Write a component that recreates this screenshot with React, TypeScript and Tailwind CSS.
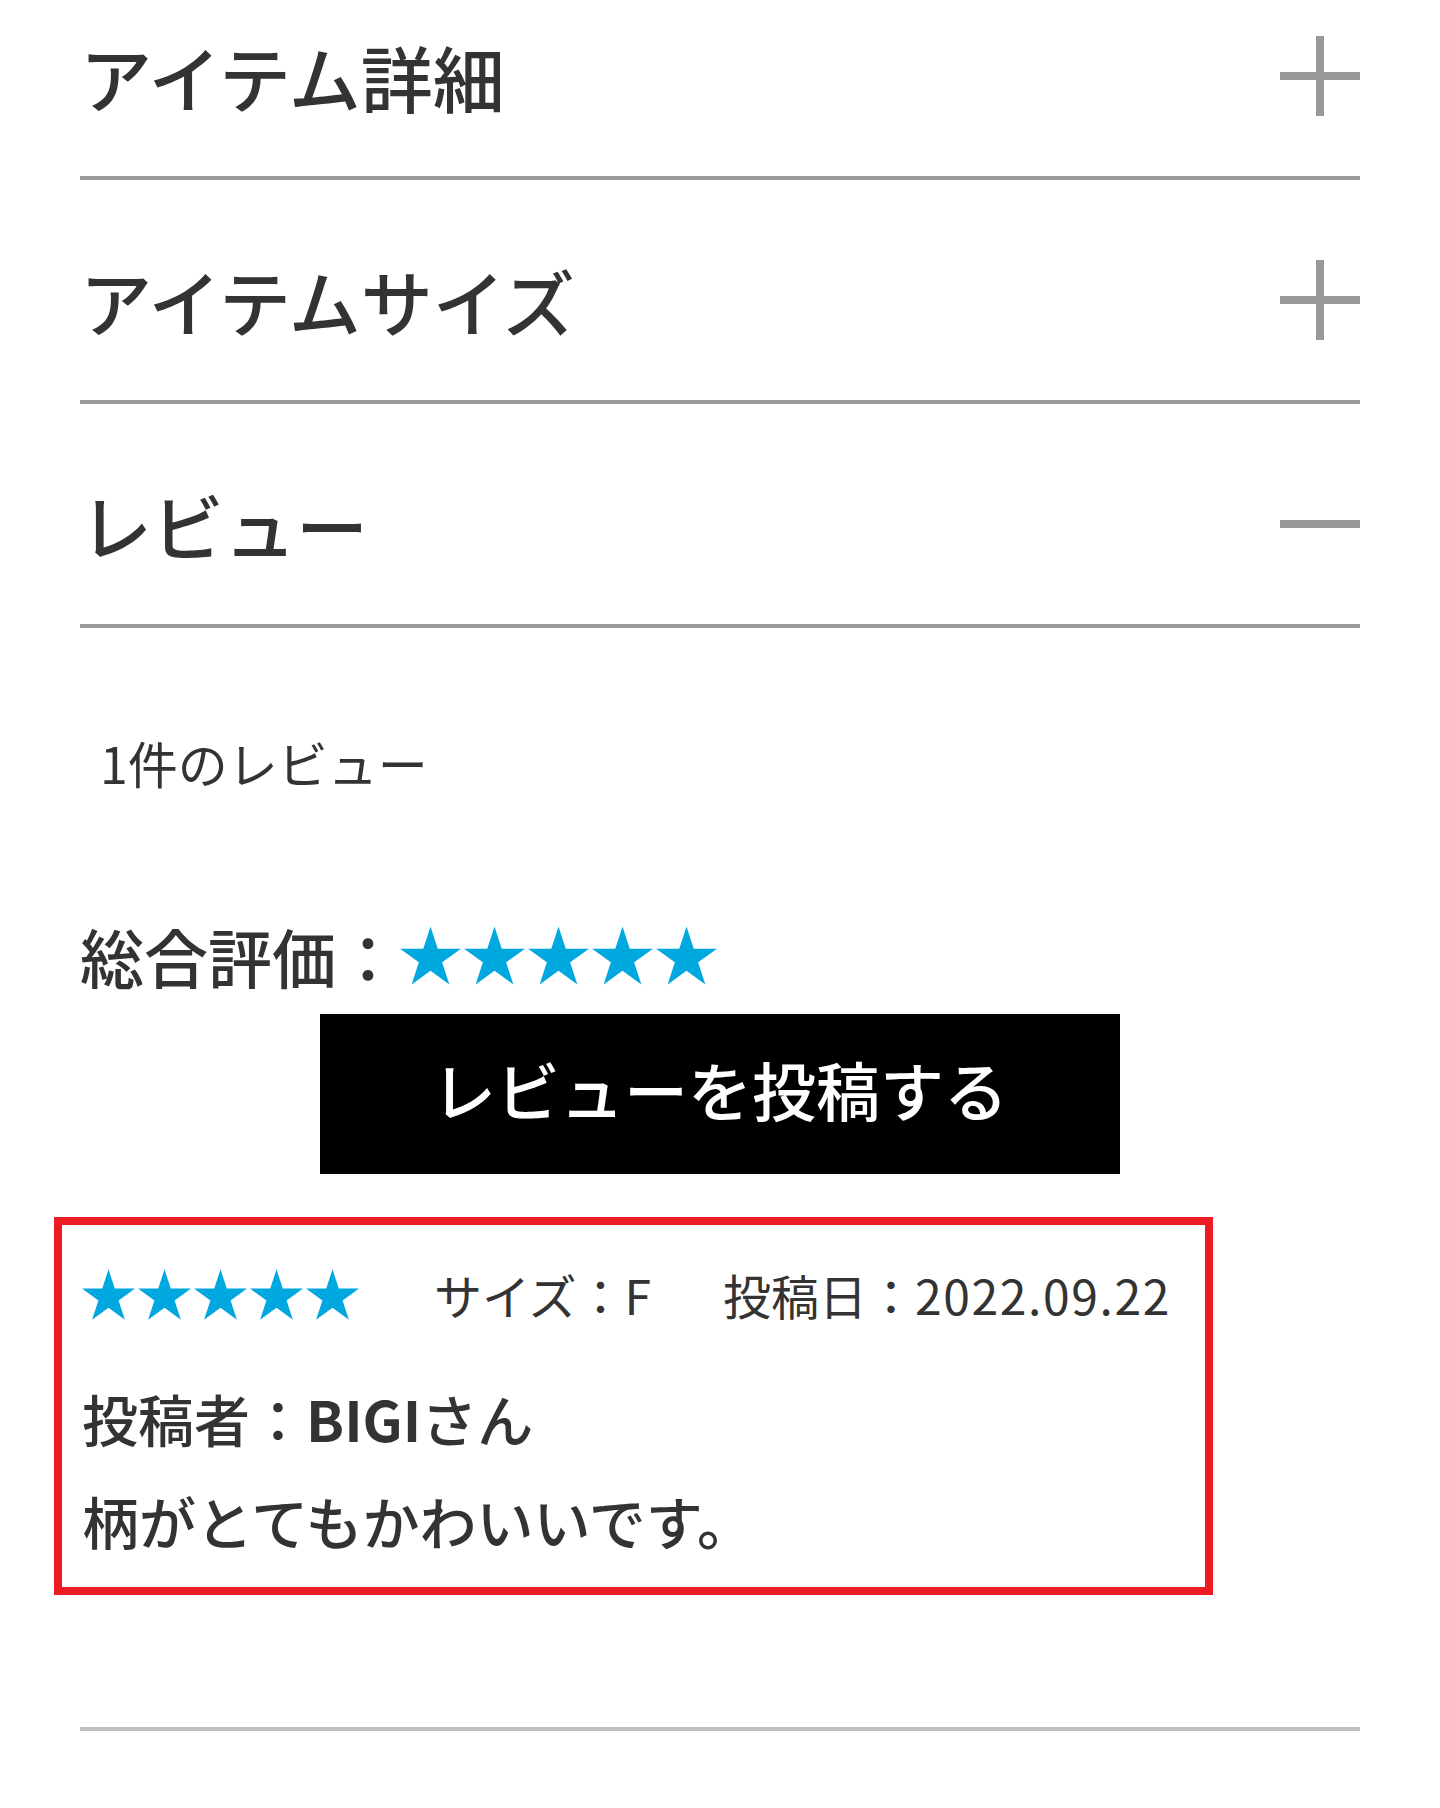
import React from "react";

const STAR_POINTS =
  "50,0 61.23,34.55 97.55,34.55 68.16,55.9 79.39,90.45 50,69.1 20.61,90.45 31.84,55.9 2.45,34.55 38.77,34.55";

function Star({ w, h }: { w: number; h: number }) {
  return (
    <svg width={w} height={h} viewBox="2.45 0 95.1 90.45" className="block shrink-0">
      <polygon fill="#00a8df" points={STAR_POINTS} />
    </svg>
  );
}

function Stars({ w, h, gap }: { w: number; h: number; gap: string }) {
  return (
    <div className={`flex items-center ${gap}`}>
      {[0, 1, 2, 3, 4].map((i) => (
        <Star key={i} w={w} h={h} />
      ))}
    </div>
  );
}

function PlusIcon() {
  return (
    <svg width={80} height={80} viewBox="0 0 80 80" className="block shrink-0">
      <rect x={36} y={0} width={8} height={80} fill="#999999" />
      <rect x={0} y={36} width={80} height={8} fill="#999999" />
    </svg>
  );
}

function MinusIcon() {
  return (
    <svg width={80} height={80} viewBox="0 0 80 80" className="block shrink-0">
      <rect x={0} y={36} width={80} height={8} fill="#999999" />
    </svg>
  );
}

function Row({ title, open, first }: { title: string; open?: boolean; first?: boolean }) {
  return (
    <div
      className={`flex items-center justify-between border-b-4 border-[#999999] ${
        first ? "pt-[36px]" : "pt-[80px]"
      } pb-[60px]`}
    >
      <span className="text-[72px] leading-none font-medium text-[#333333]">{title}</span>
      {open ? <MinusIcon /> : <PlusIcon />}
    </div>
  );
}

export default function App() {
  return (
    <div className="min-h-[1808px] w-full bg-white font-['Noto_Sans_CJK_JP',sans-serif] text-[#333333]">
      <div className="px-[80px] pb-[80px]">
        <Row title="アイテム詳細" first />
        <Row title="アイテムサイズ" />
        <Row title="レビュー" open />

        <div className="mt-[109px] pl-[20px] text-[50px] leading-none">1件のレビュー</div>

        <div className="mt-[136px] flex items-center h-[64px]">
          <span className="text-[64px] leading-none font-medium">総合評価：</span>
          <Stars w={61} h={59} gap="gap-[3px]" />
        </div>

        <button
          type="button"
          className="mx-auto mt-[27px] flex h-[160px] w-[800px] items-center justify-center bg-black pb-[12px] text-[64px] font-medium leading-none text-white"
        >
          レビューを投稿する
        </button>

        <div className="mt-[43px] ml-[-26px] w-[1159px] border-8 border-[#ed1c24] pl-[20px] pt-[41px] pb-[38px]">
          <div className="flex h-[56px] items-center">
            <Stars w={53} h={51} gap="gap-[3px]" />
            <span className="ml-[75px] text-[48px] leading-none">サイズ：F</span>
            <span className="ml-[72px] text-[48px] leading-none">
              投稿日：<span className="tracking-[1.6px]">2022.09.22</span>
            </span>
          </div>
          <div className="mt-[68px] text-[56px] leading-none font-medium">
            投稿者：<span className="font-bold">BIGI</span>さん
          </div>
          <div className="mt-[46px] text-[57px] leading-none font-medium">柄がとてもかわいいです。</div>
        </div>

        <div className="mt-[132px] h-[4px] bg-[#c0c0c0]" />
      </div>
    </div>
  );
}
